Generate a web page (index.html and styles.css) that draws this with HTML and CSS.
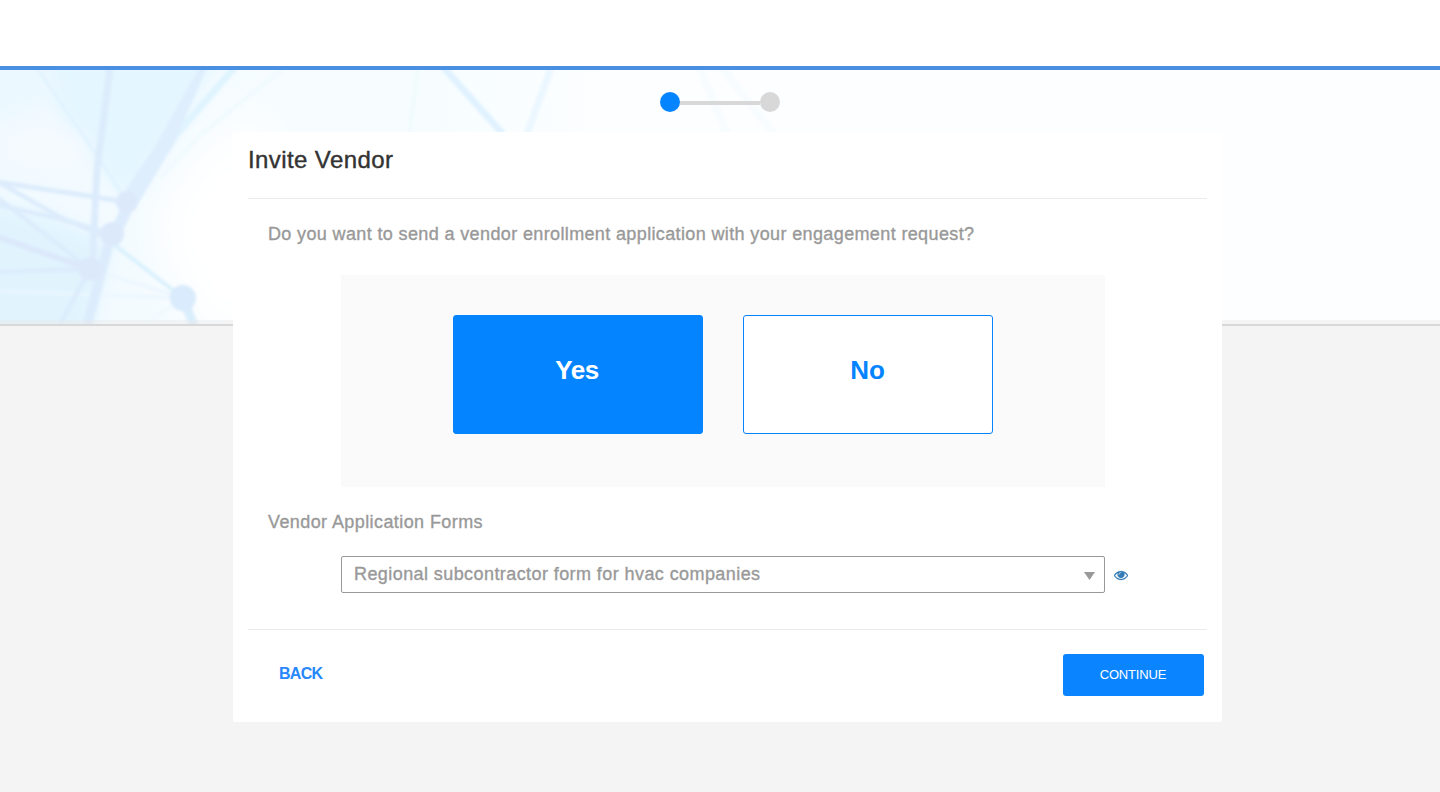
FILE: index.html
```html
<!DOCTYPE html>
<html lang="en">
<head>
<meta charset="utf-8">
<title>Invite Vendor</title>
<link rel="stylesheet" href="styles.css">
</head>
<body>
<header class="topbar"></header>
<div class="stage">
  <div class="banner">
    <svg class="network" width="1440" height="254" viewBox="0 0 1440 254" aria-hidden="true">
      <defs>
        <linearGradient id="base" x1="0" x2="1">
          <stop offset="0" stop-color="#f1faff"/>
          <stop offset=".2" stop-color="#f6fcff"/>
          <stop offset=".3" stop-color="#f7fdff"/>
          <stop offset=".42" stop-color="#fcfeff"/>
          <stop offset="1" stop-color="#fdfeff"/>
        </linearGradient>
        <filter id="soft" x="-10%" y="-10%" width="120%" height="120%"><feGaussianBlur stdDeviation="1.8"/></filter>
        <filter id="haze" x="-30%" y="-30%" width="160%" height="160%"><feGaussianBlur stdDeviation="9"/></filter>
        <filter id="glow" x="-60%" y="-60%" width="220%" height="220%"><feGaussianBlur stdDeviation="20"/></filter>
      </defs>
      <rect width="1440" height="254" fill="url(#base)"/>
      <path d="M250 40L200 80L155 140L165 200L210 270H270V40Z" fill="#fff" filter="url(#glow)"/>
      <g filter="url(#haze)">
        <path d="M25-20H225L175 60L127 132L98 95L60 45Z" fill="#e4f6ff"/>
        <path d="M-20 -20H45L60 30L-20 60Z" fill="#ecf8ff"/>
        <path d="M-20 130L60 150L112 172L86 275H-20Z" fill="#e1f4fe"/>
        <ellipse cx="45" cy="78" rx="45" ry="22" fill="#f5faff"/>
      </g>
      <g filter="url(#soft)" fill="none" stroke="#ddecfc">
        <g stroke="#e0f3fe">
          <path d="M37-2L100 90L127 132" stroke-width="3"/>
          <path d="M235-3L150 95" stroke-width="7" stroke="#dff4fe"/>
          <path d="M285-3L200 65L160 108" stroke-width="4" stroke="#f0fafe"/>
          <path d="M112 173L183 228" stroke-width="4" stroke="#d9f1fd"/>
          <path d="M90 199L183 228M0 221L183 228" stroke-width="3" stroke="#ebf6fe"/>
          <path d="M183 228L145 254" stroke-width="3" stroke="#f1f9ff"/>
        </g>
        <path d="M110-2L97 100L92 199" stroke-width="7"/>
        <path d="M199-3H207L174 74L138 134L120 128L155 76Z" fill="#dfeefd" stroke="none"/>
        <path d="M132 128L112 170" stroke-width="12"/>
        <path d="M-2 112L127 132" stroke-width="5"/>
        <path d="M-2 135L60 149L112 164M-2 128L90 199M-2 112L60 147L112 170" stroke-width="4.500"/>
        <path d="M-2 167L90 199" stroke-width="6" stroke="#dce8fb"/>
        <path d="M-2 202L90 199M90 199L59 256" stroke-width="5"/>
        <path d="M109 172L87 256" stroke-width="10"/>
        <path d="M183 228L194 256" stroke-width="9" stroke="#d9eefc"/>
        <path d="M418-2L409 64" stroke-width="4" stroke="#f0fafd"/>
        <path d="M443-3L503 64" stroke-width="7" stroke="#e0f2ff"/>
        <path d="M551-2L527 64" stroke-width="7" stroke="#ebf7ff"/>
        <path d="M700-2L727 64M722-2L774 64" stroke-width="7" stroke="#f7fcfe"/>
        <g fill="#dce9fb" stroke="none">
          <circle cx="127" cy="132" r="11"/>
          <circle cx="112" cy="164" r="12"/>
          <circle cx="90" cy="199" r="12"/>
        </g>
      </g>
      <circle cx="183" cy="228" r="13" fill="#d9ebfc" filter="url(#soft)"/>
      <rect y="250" width="1440" height="4" fill="#e8e8e8" fill-opacity=".4"/>
    </svg>
  </div>
  <main class="content">
    <div class="steps"><span class="dot active"></span><span class="bar"></span><span class="dot"></span></div>
    <section class="card">
      <h1 class="title">Invite Vendor</h1>
      <p class="question">Do you want to send a vendor enrollment application with your engagement request?</p>
      <div class="choices">
        <button class="choice selected">Yes</button>
        <button class="choice">No</button>
      </div>
      <p class="label">Vendor Application Forms</p>
      <div class="field">
        <div class="select">
          <span>Regional subcontractor form for hvac companies</span>
          <svg class="caret" width="11" height="8" viewBox="0 0 11 8"><path d="M0 0H11L5.500 8Z" fill="#999"/></svg>
        </div>
        <svg class="eye" width="14" height="14" viewBox="0 0 1792 1792"><path fill="#337ab7" stroke="#337ab7" stroke-width="30" d="M1664 960q-152-236-381-353 61 104 61 225 0 185-131.500 316.500t-316.500 131.500-316.500-131.500-131.500-316.500q0-121 61-225-229 117-381 353 133 205 333.500 326.500t434.500 121.500 434.500-121.500 333.500-326.500zm-720-384q0-20-14-34t-34-14q-125 0-214.500 89.500t-89.500 214.500q0 20 14 34t34 14 34-14 14-34q0-86 61-147t147-61q20 0 34-14t14-34zm848 384q0 34-20 69-140 230-376.500 368.500t-499.500 138.500-499.500-139-376.500-368q-20-35-20-69t20-69q140-229 376.500-368t499.500-139 499.500 139 376.500 368q20 35 20 69z"/></svg>
      </div>
      <div class="actions">
        <a class="back">BACK</a>
        <button class="continue">CONTINUE</button>
      </div>
    </section>
  </main>
</div>
</body>
</html>
```
FILE: styles.css
```css
* { box-sizing: border-box; }
body {
  margin: 0;
  height: 792px;
  overflow: hidden;
  background: #f4f4f4;
  font-family: "Liberation Sans", Arial, sans-serif;
}
.topbar { height: 70px; background: #fff; border-bottom: 4px solid #4a90e2; }
.stage { display: grid; }
.banner, .content { grid-area: 1 / 1; }
.banner { height: 256px; border-bottom: 2px solid #d8d8d8; }
.network { display: block; }
.content { z-index: 1; padding-top: 22px; }
.steps { display: flex; justify-content: center; align-items: center; height: 20px; }
.dot { width: 20px; height: 20px; border-radius: 50%; background: #d8d8d8; }
.dot.active { background: #0584ff; }
.bar { width: 80px; height: 4px; margin-top: 2px; background: #d8d8d8; }
.card {
  width: 989px;
  height: 590px;
  margin: 20px 0 0 233px;
  padding: 0 15px;
  background: #fff;
  border-radius: 2px;
}
.title {
  height: 67px;
  margin: 0;
  padding-top: 14px;
  border-bottom: 1px solid #ebebeb;
  font-size: 24px;
  line-height: 28px;
  font-weight: 400;
  letter-spacing: .4px;
  color: #333;
  -webkit-text-stroke: .4px #333;
}
.question, .label {
  margin: 0;
  padding-left: 20px;
  font-size: 18px;
  line-height: 22px;
  letter-spacing: .41px;
  color: #999;
  -webkit-text-stroke: .35px #999;
}
.question { padding-top: 24px; letter-spacing: .37px; }
.choices {
  display: flex;
  justify-content: center;
  gap: 40px;
  width: 764px;
  height: 212px;
  margin: 30px 0 0 93px;
  padding-top: 40px;
  background: #fafafa;
}
.choice {
  width: 250px;
  height: 119px;
  padding: 0 1px 10px 0;
  border: 1px solid #0584ff;
  border-radius: 3px;
  background: #fff;
  color: #0584ff;
  font: 700 26px/30px "Liberation Sans", Arial, sans-serif;
}
.choice.selected { padding-right: 2px; background: #0584ff; color: #fff; letter-spacing: -.4px; }
.label { margin-top: 24px; }
.field { display: flex; align-items: center; margin: 23px 0 0 93px; }
.select {
  display: flex;
  align-items: center;
  justify-content: space-between;
  width: 764px;
  height: 37px;
  padding: 0 9px 1px 12px;
  border: 1px solid #999;
  border-radius: 2px;
  font-size: 18px;
  letter-spacing: .42px;
  color: #999;
  -webkit-text-stroke: .35px #999;
}
.caret { margin-top: 3px; }
.eye { margin-left: 9px; }
.actions {
  display: flex;
  justify-content: space-between;
  margin-top: 36px;
  padding: 24px 3px 0 31px;
  border-top: 1px solid #ebebeb;
}
.back {
  padding-top: 11px;
  font-size: 16px;
  line-height: 18px;
  font-weight: 700;
  letter-spacing: -.7px;
  color: #2787fb;
}
.continue {
  width: 141px;
  height: 42px;
  padding: 0 1px 2px 0;
  border: 0;
  border-radius: 3px;
  background: #0a84ff;
  color: #fff;
  font: 400 13px "Liberation Sans", Arial, sans-serif;
  letter-spacing: -.15px;
}
```
